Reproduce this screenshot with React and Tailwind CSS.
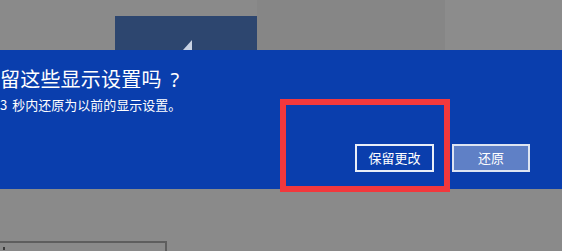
import React from 'react'

const cjk = { fontFamily: '"Noto Sans CJK SC", "Noto Sans", sans-serif' }

export default function App() {
  return (
    <div className="relative w-[562px] h-[251px] overflow-hidden bg-[#8a8a8a]" style={cjk}>
      {/* top strip behind the dialog */}
      <div className="flex h-[50px]">
        <div className="w-[115px]" />
        <div className="relative mt-[16px] h-[34px] w-[142px] bg-[#2d466f]">
          <div className="absolute bottom-0 left-[68px] h-0 w-0 border-b-[10px] border-l-[9px] border-b-[#c9d3e3] border-l-transparent" />
        </div>
        <div className="w-[188px] bg-[#868686]" />
        <div className="flex-1 bg-[#8c8c8c]" />
      </div>

      {/* dialog band */}
      <div className="flex h-[139px] flex-col bg-[#0a3ead] text-white">
        <div className="mt-[16px] text-[20px] leading-[26px] tracking-[0.2px]">
          留这些显示设置吗<span className="ml-[9px]" style={{ fontFamily: '"Noto Sans", sans-serif' }}>?</span>
        </div>
        <div className="mt-[4px] text-[13px] leading-[16px]">
          3<span className="ml-[5px]">秒内还原为以前的显示设置。</span>
        </div>
        <div className="mt-[31px] flex gap-[18px] pl-[355px]">
          <button className="h-[28px] w-[79px] border-2 border-[#e9eef8] bg-[#0a3ead] text-[13px] text-white">
            保留更改
          </button>
          <button className="h-[28px] w-[78px] border-2 border-[#dde4f2] bg-[#5f80c6] text-[13px] text-white">
            还原
          </button>
        </div>
      </div>

      {/* lower area */}
      <div className="mt-[52px] h-[20px] w-[167px] border-l-0 border-r-2 border-t-2 border-[#5e5e5e]">
        <div className="ml-[3px] mt-[4px] h-[3px] w-[2px] bg-[#3a3a3a]" />
      </div>

      {/* red highlight */}
      <div className="absolute left-[280px] top-[99px] h-[93px] w-[170px] border-[6px] border-[#f2383c]" />
    </div>
  )
}
